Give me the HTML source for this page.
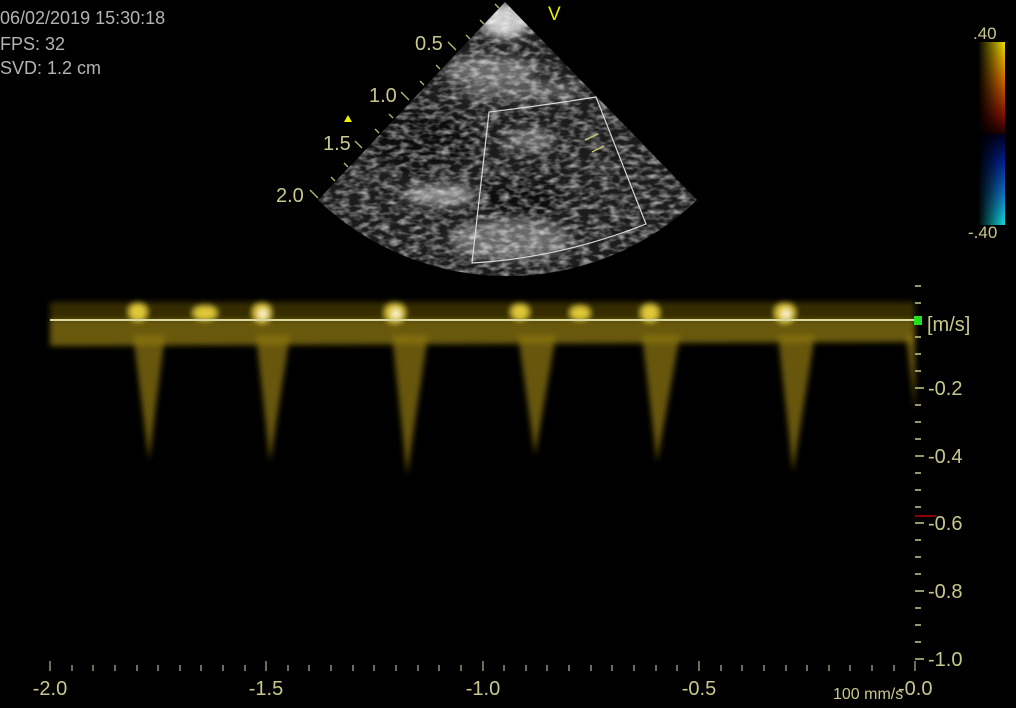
<!DOCTYPE html>
<html><head><meta charset="utf-8">
<style>
html,body{margin:0;padding:0;background:#000;width:1016px;height:708px;overflow:hidden}
svg{display:block}
.t{font-family:"Liberation Sans",sans-serif}
</style></head><body>
<svg width="1016" height="708" viewBox="0 0 1016 708" xmlns="http://www.w3.org/2000/svg">
<defs>
<filter id="speck" x="0" y="0" width="100%" height="100%">
<feTurbulence type="fractalNoise" baseFrequency="0.1 0.2" numOctaves="2" seed="4" result="n"/>
<feColorMatrix in="n" type="matrix" values="0 0 0 0 1  0 0 0 0 1  0 0 0 0 1  2.2 0 0 0 -0.85" result="w"/>
<feComposite in="w" in2="SourceGraphic" operator="in"/>
</filter>
<filter id="bl" x="-20%" y="-20%" width="140%" height="140%"><feGaussianBlur stdDeviation="3"/></filter>
<filter id="bl2" x="-50%" y="-50%" width="200%" height="200%"><feGaussianBlur stdDeviation="5"/></filter>
<clipPath id="sec"><path d="M505,2 L318,200 A274,274 0 0 0 697,200 Z"/></clipPath>
<linearGradient id="cbT" x1="0" y1="0" x2="0" y2="1">
<stop offset="0" stop-color="#f0e000"/><stop offset="0.4" stop-color="#d07000"/><stop offset="0.8" stop-color="#801000"/><stop offset="1" stop-color="#200000"/></linearGradient>
<linearGradient id="cbB" x1="0" y1="0" x2="0" y2="1">
<stop offset="0" stop-color="#000020"/><stop offset="0.3" stop-color="#002090"/><stop offset="0.65" stop-color="#1070c0"/><stop offset="1" stop-color="#10e0e0"/></linearGradient>
<linearGradient id="cbH" x1="0" y1="0" x2="1" y2="0">
<stop offset="0" stop-color="#000" stop-opacity="1"/><stop offset="1" stop-color="#000" stop-opacity="0"/></linearGradient>
</defs>

<g class="t" fill="#b4b4b4" font-size="18">
<text x="0" y="24">06/02/2019 15:30:18</text>
<text x="0" y="50">FPS: 32</text>
<text x="0" y="74">SVD: 1.2 cm</text>
</g>

<g clip-path="url(#sec)">
<rect x="300" y="0" width="420" height="290" fill="#1c1c1c"/>
<g filter="url(#bl2)">
<ellipse cx="505" cy="20" rx="25" ry="18" fill="#c8c8c8"/>
<ellipse cx="490" cy="70" rx="45" ry="14" fill="#6a6a6a"/>
<ellipse cx="520" cy="90" rx="60" ry="10" fill="#5a5a5a"/>
<ellipse cx="440" cy="195" rx="35" ry="10" fill="#8a8a8a"/>
<ellipse cx="510" cy="240" rx="60" ry="20" fill="#6a6a6a"/>
<ellipse cx="530" cy="140" rx="25" ry="10" fill="#666"/>
<ellipse cx="420" cy="140" rx="50" ry="30" fill="#0c0c0c"/>
<ellipse cx="520" cy="200" rx="40" ry="20" fill="#101010"/>
</g>
<rect x="300" y="0" width="420" height="290" fill="#fff" filter="url(#speck)" opacity="0.6"/>
</g>
<path d="M489,112 Q540,106 596,97 L646,224 Q560,258 472,263 Z" fill="none" stroke="#d8d8d8" stroke-width="1.2"/>
<g stroke="#c8c870" stroke-width="1.5"><line x1="585" y1="140" x2="598" y2="134"/><line x1="592" y1="152" x2="604" y2="146"/></g>
<g stroke="#b8b870" stroke-width="1.3">
<line x1="495" y1="4" x2="499" y2="8"/><line x1="480" y1="20" x2="484" y2="24"/><line x1="466" y1="35" x2="470" y2="39"/>
<line x1="448" y1="42" x2="456" y2="50"/><line x1="436" y1="65" x2="440" y2="69"/><line x1="420" y1="81" x2="424" y2="85"/>
<line x1="401" y1="92" x2="409" y2="100"/><line x1="389" y1="114" x2="393" y2="118"/><line x1="375" y1="129" x2="379" y2="133"/>
<line x1="355" y1="141" x2="362" y2="148"/><line x1="344" y1="163" x2="348" y2="167"/><line x1="331" y1="177" x2="335" y2="181"/>
<line x1="310" y1="190" x2="318" y2="198"/>
</g>
<g class="t" fill="#c8c88c" font-size="20">
<text x="415" y="50">0.5</text><text x="369" y="102">1.0</text><text x="323" y="150">1.5</text><text x="276" y="202">2.0</text>
</g>
<text x="548" y="20" class="t" fill="#e8f000" font-size="19">V</text>
<path d="M344,122 L352,122 L348,115 Z" fill="#f0f000"/>

<rect x="978" y="42" width="27" height="92" fill="url(#cbT)"/>
<rect x="978" y="134" width="27" height="91" fill="url(#cbB)"/>
<rect x="978" y="42" width="27" height="183" fill="url(#cbH)"/>
<g class="t" fill="#c8c88c" font-size="17"><text x="973" y="39">.40</text><text x="968" y="238">-.40</text></g>

<g filter="url(#bl)">
<path d="M50,302 L915,302 L915,320 L50,320 Z" fill="#3a3000" opacity="0.9"/>
<path d="M50,320 L915,320 L915,342 L50,346 Z" fill="#7a6808" opacity="0.85"/>
<g fill="#8a7410" opacity="0.75">
<path d="M133,335 L165,335 L149,460 Z"/>
<path d="M256,335 L290,335 L270,462 Z"/>
<path d="M392,335 L428,335 L407,475 Z"/>
<path d="M518,335 L556,335 L535,455 Z"/>
<path d="M642,335 L680,335 L657,462 Z"/>
<path d="M778,335 L815,335 L793,472 Z"/>
<path d="M906,335 L915,335 L915,410 Z"/>
</g>
<g fill="#e0c838">
<ellipse cx="138" cy="312" rx="9" ry="9"/><ellipse cx="205" cy="313" rx="12" ry="7"/>
<ellipse cx="262" cy="313" rx="9" ry="10"/><ellipse cx="395" cy="313" rx="10" ry="10"/>
<ellipse cx="520" cy="312" rx="9" ry="8"/><ellipse cx="580" cy="313" rx="10" ry="7"/>
<ellipse cx="650" cy="313" rx="9" ry="9"/><ellipse cx="785" cy="313" rx="10" ry="10"/>
</g>
<g fill="#fffbe0"><circle cx="263" cy="314" r="4"/><circle cx="396" cy="314" r="4"/><circle cx="786" cy="314" r="4"/></g>
</g>
<line x1="50" y1="320" x2="915" y2="320" stroke="#d8d8a0" stroke-width="2"/>
<rect x="914" y="316" width="8" height="9" fill="#20e020"/>

<g stroke="#c8c88c" stroke-width="1.5">
<line x1="915" y1="286" x2="921" y2="286"/><line x1="915" y1="303" x2="921" y2="303"/>
<line x1="915" y1="337" x2="921" y2="337"/><line x1="915" y1="354" x2="921" y2="354"/><line x1="915" y1="371" x2="921" y2="371"/>
<line x1="915" y1="388" x2="924" y2="388"/>
<line x1="915" y1="405" x2="921" y2="405"/><line x1="915" y1="422" x2="921" y2="422"/><line x1="915" y1="439" x2="921" y2="439"/>
<line x1="915" y1="456" x2="924" y2="456"/>
<line x1="915" y1="473" x2="921" y2="473"/><line x1="915" y1="490" x2="921" y2="490"/><line x1="915" y1="507" x2="921" y2="507"/>
<line x1="915" y1="523" x2="924" y2="523"/>
<line x1="915" y1="540" x2="921" y2="540"/><line x1="915" y1="557" x2="921" y2="557"/><line x1="915" y1="574" x2="921" y2="574"/>
<line x1="915" y1="591" x2="924" y2="591"/>
<line x1="915" y1="608" x2="921" y2="608"/><line x1="915" y1="625" x2="921" y2="625"/><line x1="915" y1="642" x2="921" y2="642"/>
<line x1="915" y1="659" x2="924" y2="659"/>
</g>
<line x1="915" y1="516" x2="936" y2="516" stroke="#e00000" stroke-width="1.2"/>
<g class="t" fill="#c8c88c" font-size="20">
<text x="927" y="331">[m/s]</text>
<text x="928" y="395">-0.2</text><text x="928" y="463">-0.4</text><text x="928" y="530">-0.6</text>
<text x="928" y="598">-0.8</text><text x="928" y="666">-1.0</text>
</g>

<g stroke="#d8d8b8" stroke-width="1">
<line x1="50" y1="661" x2="50" y2="671"/><line x1="266" y1="661" x2="266" y2="671"/><line x1="483" y1="661" x2="483" y2="671"/><line x1="699" y1="661" x2="699" y2="671"/><line x1="915" y1="661" x2="915" y2="671"/>
</g>
<path d="M72,665v6M93,665v6M115,665v6M137,665v6M158,665v6M180,665v6M201,665v6M223,665v6M245,665v6M288,665v6M309,665v6M331,665v6M353,665v6M374,665v6M396,665v6M418,665v6M439,665v6M461,665v6M504,665v6M526,665v6M547,665v6M569,665v6M591,665v6M612,665v6M634,665v6M656,665v6M677,665v6M721,665v6M742,665v6M764,665v6M786,665v6M807,665v6M829,665v6M850,665v6M872,665v6M894,665v6" stroke="#d8d8b8" stroke-width="1"/>
<g class="t" fill="#c8c88c" font-size="20" text-anchor="middle">
<text x="50" y="695">-2.0</text><text x="266" y="695">-1.5</text><text x="483" y="695">-1.0</text><text x="699" y="695">-0.5</text>
</g>
<text x="833" y="699" class="t" fill="#c8c88c" font-size="16">100 mm/s</text>
<text x="898" y="695" class="t" fill="#c8c88c" font-size="20">-0.0</text>
</svg>
</body></html>
